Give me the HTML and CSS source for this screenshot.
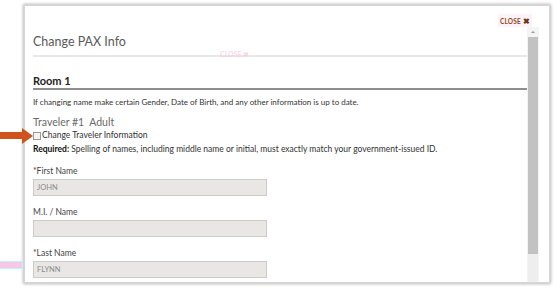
FILE: index.html
```html
<!DOCTYPE html>
<html lang="en">
<head>
<meta charset="utf-8">
<title>Change PAX Info</title>
<link rel="stylesheet" href="styles.css">
</head>
<body>
<div class="page">
  <div class="modal">
    <div class="modal-top">
      <a class="close" href="#">CLOSE <span class="close-x">&#10006;</span></a>
    </div>
    <div class="modal-body">
      <div class="content">
        <h1 class="title">Change PAX Info</h1>
        <h2 class="room">Room 1</h2>
        <p class="note">If changing name make certain Gender, Date of Birth, and any other information is up to date.</p>
        <div class="traveler">Traveler #1 &nbsp;Adult</div>
        <label class="check-row"><span class="checkbox"></span>Change Traveler Information</label>
        <p class="required"><b>Required:</b> Spelling of names, including middle name or initial, must exactly match your government-issued ID.</p>
        <div class="field">
          <div class="label">*First Name</div>
          <div class="input">JOHN</div>
        </div>
        <div class="field">
          <div class="label">M.I. / Name</div>
          <div class="input"></div>
        </div>
        <div class="field">
          <div class="label">*Last Name</div>
          <div class="input">FLYNN</div>
        </div>
      </div>
      <div class="scrollbar">
        <div class="sb-arrow"></div>
        <div class="sb-thumb"></div>
        <div class="sb-track"></div>
      </div>
    </div>
  </div>
  <div class="ghost-close">CLOSE &#10006;</div>
  <div class="arrow">
    <div class="arrow-shaft"></div>
    <div class="arrow-head"></div>
  </div>
  <div class="ghost-arrow"></div>
</div>
</body>
</html>
```

FILE: styles.css
```css
html, body {
  margin: 0;
  padding: 0;
  background: #fff;
}
.page {
  position: relative;
  width: 560px;
  height: 292px;
  overflow: hidden;
  font-family: Lato, "Open Sans", sans-serif;
  color: #333;
  padding-top: 5px;
  padding-left: 24px;
  box-sizing: border-box;
}
.modal {
  width: 526px;
  height: 278px;
  box-sizing: border-box;
  background: #fff;
  border: 1px solid #d6d6d6;
  box-shadow: 0 0 3px 1px rgba(0,0,0,0.28);
  display: flex;
  flex-direction: column;
  overflow: hidden;
}
.modal-top {
  height: 21px;
  flex: none;
  display: flex;
  justify-content: flex-end;
  align-items: flex-end;
  padding-right: 17px;
}
.close {
  font-size: 6.5px;
  font-weight: 700;
  letter-spacing: 0.2px;
  color: #8a4a1c;
  text-decoration: none;
  background: #fdf2f7;
  padding: 3px 2px 1px 2px;
  line-height: 8px;
}
.close-x {
  font-size: 8px;
  color: #6b3312;
}
.modal-body {
  flex: 1;
  display: flex;
  min-height: 0;
}
.content {
  flex: 1;
  padding-left: 8px;
  min-width: 0;
}
.title {
  margin: 6px 0 0 0;
  font-size: 12.5px;
  font-weight: 400;
  color: #5a5a5a;
  line-height: 18px;
  padding-bottom: 4px;
  border-bottom: 2px solid #e8e8e8;
}
.room {
  margin: 17px 0 0 0;
  font-size: 11px;
  font-weight: 700;
  color: #222;
  line-height: 14px;
  border-bottom: 2px solid #8e8e8e;
}
.note {
  margin: 6px 0 0 0;
  font-size: 8px;
  line-height: 12px;
  color: #333;
}
.traveler {
  margin-top: 7px;
  font-size: 10.5px;
  font-weight: 400;
  line-height: 14px;
  color: #6a6a6a;
}
.check-row {
  display: flex;
  align-items: center;
  font-size: 8.5px;
  line-height: 11px;
  color: #333;
  margin-top: 1px;
}
.checkbox {
  width: 6px;
  height: 6px;
  border: 1px solid #9a9a9a;
  background: #f4f4f4;
  margin-right: 1px;
  flex: none;
}
.required {
  margin: 2px 0 0 0;
  font-size: 8.5px;
  line-height: 12px;
  color: #333;
}
.required b {
  color: #111;
}
.field {
  margin-top: 10px;
}
.field + .field {
  margin-top: 10px;
}
.label {
  font-size: 8.5px;
  line-height: 12px;
  color: #444;
}
.input {
  margin-top: 2px;
  width: 234px;
  height: 17px;
  box-sizing: border-box;
  background: #e9e7e3;
  border: 1px solid #cdcbc8;
  font-size: 7.5px;
  line-height: 15px;
  color: #8a8a8a;
  padding-left: 3px;
}
.scrollbar {
  width: 12px;
  flex: none;
  margin-right: 10px;
  display: flex;
  flex-direction: column;
  align-items: center;
  background: #f4f4f4;
}
.sb-arrow {
  width: 0;
  height: 0;
  margin-top: 4px;
  margin-bottom: 4px;
  border-left: 2px solid transparent;
  border-right: 2px solid transparent;
  border-bottom: 2px solid #999;
}
.sb-thumb {
  width: 10px;
  height: 217px;
  background: #c2c2c2;
  flex: none;
}
.sb-track {
  flex: 1;
  width: 10px;
  background: #eeeeee;
}
.ghost-close {
  position: absolute;
  left: 220px;
  top: 50px;
  font-size: 7px;
  font-weight: 700;
  color: #f9c6e2;
  opacity: 0.7;
  line-height: 8px;
}
.arrow {
  position: absolute;
  left: 0;
  top: 127px;
  width: 33px;
  height: 17px;
  display: flex;
  align-items: center;
}
.arrow-shaft {
  width: 22px;
  height: 7px;
  background: #cf531d;
}
.arrow-head {
  width: 0;
  height: 0;
  border-top: 8.5px solid transparent;
  border-bottom: 8.5px solid transparent;
  border-left: 11px solid #cf531d;
}
.ghost-arrow {
  position: absolute;
  left: 0;
  top: 262px;
  width: 22px;
  height: 6px;
  background: #f6c9e6;
  box-shadow: 0 0 0 1px #bff4fb;
}
```
